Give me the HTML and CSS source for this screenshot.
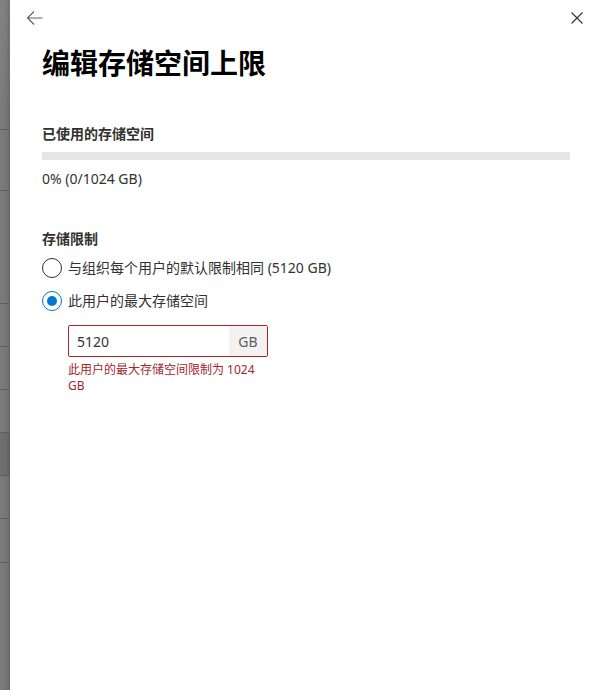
FILE: index.html
```html
<!DOCTYPE html>
<html lang="zh-CN">
<head>
<meta charset="utf-8">
<title>编辑存储空间上限</title>
<link rel="stylesheet" href="styles.css">
</head>
<body>
<div class="screen">
  <div class="backdrop">
    <div class="bd-row bd-h130"></div>
    <div class="bd-row bd-h61"></div>
    <div class="bd-row bd-h113"></div>
    <div class="bd-row bd-h43"></div>
    <div class="bd-row bd-h43"></div>
    <div class="bd-row bd-h43"></div>
    <div class="bd-row bd-h43 bd-dark"></div>
    <div class="bd-row bd-h43"></div>
    <div class="bd-row bd-h44"></div>
    <div class="bd-fill"></div>
  </div>
  <div class="panel">
    <div class="panel-header">
      <button class="icon-btn back" aria-label="返回">
        <svg width="17" height="16" viewBox="0 0 17 16"><path d="M8 1.5 1.5 8 8 14.5M1.5 8H16.5" fill="none" stroke="#605e5c" stroke-width="1.1"/></svg>
      </button>
      <button class="icon-btn close" aria-label="关闭">
        <svg width="12" height="12" viewBox="0 0 12 12"><path d="M0.5 0.5 11.5 11.5M11.5 0.5 0.5 11.5" fill="none" stroke="#323130" stroke-width="1.1"/></svg>
      </button>
    </div>
    <h1 class="title">编辑存储空间上限</h1>

    <div class="label label-used">已使用的存储空间</div>
    <div class="bar"><div class="bar-fill" style="width:0%"></div></div>
    <div class="usage">0% (0/1024 GB)</div>

    <div class="label label-limit">存储限制</div>
    <div class="radio-row first">
      <span class="radio"></span>
      <span class="radio-text">与组织每个用户的默认限制相同 (5120 GB)</span>
    </div>
    <div class="radio-row second">
      <span class="radio checked"></span>
      <span class="radio-text">此用户的最大存储空间</span>
    </div>

    <div class="field">
      <div class="input">
        <span class="input-value">5120</span>
        <span class="suffix">GB</span>
      </div>
      <div class="error">此用户的最大存储空间限制为 1024 GB</div>
    </div>
  </div>
</div>
</body>
</html>
```

FILE: styles.css
```css
html, body {
  margin: 0;
  padding: 0;
  background: #ffffff;
}

body {
  font-family: "Noto Sans", "Noto Sans CJK SC", sans-serif;
  color: #323130;
  font-size: 14px;
}

.screen {
  display: flex;
  width: 593px;
  height: 690px;
  overflow: hidden;
}

.backdrop {
  width: 10px;
  flex: 0 0 10px;
  display: flex;
  flex-direction: column;
  background: linear-gradient(to right, #7b7b7b 0%, #767676 60%, #676767 100%);
}

.bd-row {
  box-sizing: border-box;
  border-bottom: 1px solid #5f5f5f;
}

.bd-h130 { height: 130px; background: linear-gradient(to bottom, rgba(255,255,255,0.06), rgba(255,255,255,0)); }
.bd-h61 { height: 61px; }
.bd-h113 { height: 113px; }
.bd-h43 { height: 43px; }
.bd-h44 { height: 44px; }
.bd-dark { background: rgba(0,0,0,0.08); }
.bd-fill { flex: 1; }

.panel {
  flex: 1;
  background: #ffffff;
  padding: 0 23px 0 32px;
  display: flex;
  flex-direction: column;
}

.panel-header {
  height: 36px;
  margin: 0 -13px 0 -16px;
  display: flex;
  justify-content: space-between;
  align-items: center;
}

.icon-btn {
  border: none;
  background: transparent;
  padding: 0;
  margin: 0;
  display: flex;
  align-items: center;
  justify-content: center;
}

.back {
  width: 17px;
  height: 16px;
  margin-top: 0;
}

.close {
  width: 12px;
  height: 12px;
  margin-top: 0;
}

.title {
  margin: 9px 0 0 0;
  font-size: 28px;
  line-height: 36px;
  font-weight: 700;
  color: #000000;
}

.label {
  font-size: 14px;
  line-height: 20px;
  font-weight: 600;
  color: #323130;
}

.label-used {
  margin-top: 43px;
}

.bar {
  margin-top: 8px;
  height: 8px;
  background: #e6e6e6;
}

.bar-fill {
  height: 100%;
  background: #0078d4;
}

.usage {
  margin-top: 9px;
  line-height: 20px;
  font-size: 14px;
  color: #323130;
}

.label-limit {
  margin-top: 40px;
}

.radio-row {
  display: flex;
  align-items: center;
  height: 20px;
}

.radio-row.first { margin-top: 9px; }
.radio-row.second { margin-top: 13px; }

.radio {
  box-sizing: border-box;
  width: 20px;
  height: 20px;
  border: 1px solid #323130;
  border-radius: 50%;
  display: flex;
  align-items: center;
  justify-content: center;
  flex: 0 0 20px;
}

.radio.checked {
  border-color: #0078d4;
}

.radio.checked::after {
  content: "";
  width: 10px;
  height: 10px;
  border-radius: 50%;
  background: #0078d4;
}

.radio-text {
  margin-left: 6px;
  font-size: 14px;
  line-height: 20px;
  color: #323130;
}

.field {
  margin: 14px 0 0 26px;
  width: 200px;
}

.input {
  box-sizing: border-box;
  height: 32px;
  border: 1px solid #a4262c;
  border-radius: 2px;
  display: flex;
  align-items: stretch;
  overflow: hidden;
}

.input-value {
  flex: 1;
  padding-left: 8px;
  display: flex;
  align-items: center;
  font-size: 14px;
  color: #323130;
}

.suffix {
  width: 38px;
  background: #f3f2f1;
  display: flex;
  align-items: center;
  justify-content: center;
  font-size: 14px;
  color: #605e5c;
}

.error {
  margin-top: 5px;
  font-size: 12px;
  line-height: 16px;
  color: #a4262c;
}
```
